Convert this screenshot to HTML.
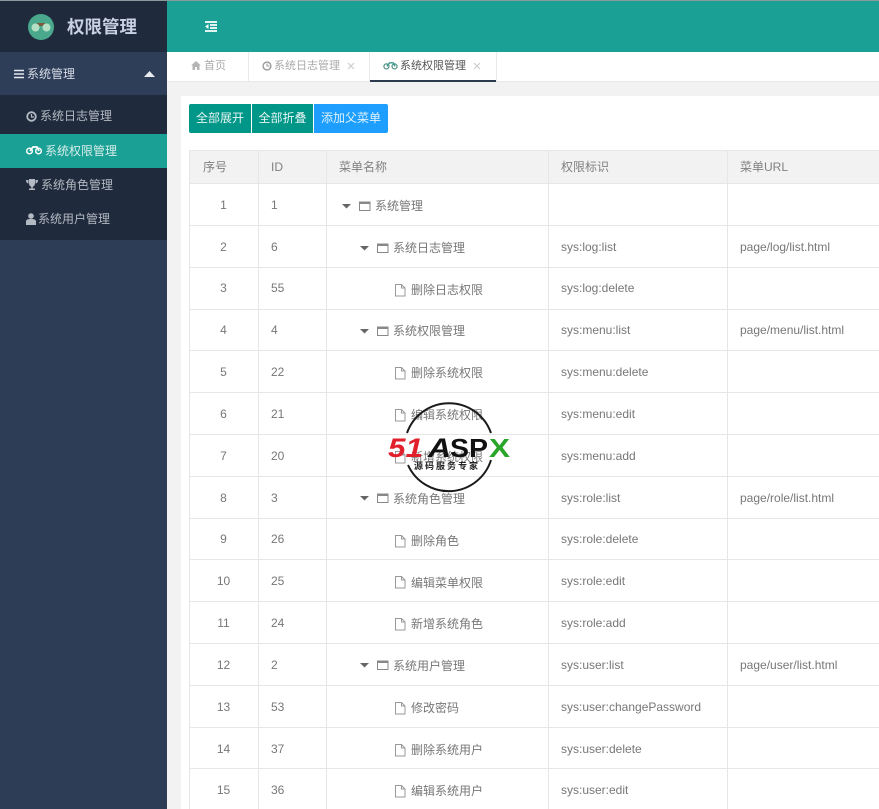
<!DOCTYPE html>
<html lang="zh"><head><meta charset="utf-8">
<style>
html,body{margin:0;padding:0;width:879px;height:809px;overflow:hidden;background:#f2f2f2;font-family:"Liberation Sans","Noto Sans CJK SC",sans-serif;font-size:12px;color:#777}
div,svg,span{position:absolute;white-space:nowrap}
.l{height:1px;background:#e6e6e6}
.v{width:1px;background:#e6e6e6;top:150px;height:659px}
.t{line-height:20px;height:20px}
.th{top:157px;color:#808080}
.m{color:#b4bac3;line-height:20px;height:20px}
.tab{font-size:11px}
svg{overflow:visible}
</style></head><body>
<!-- top bar -->
<div style="left:167px;top:0;width:712px;height:52px;background:#1aa094"></div>
<div style="left:0;top:0;width:167px;height:52px;background:#1f2a3c"></div>
<div style="left:0;top:0;width:879px;height:1px;background:#8a9a9a"></div>
<svg style="left:28px;top:14px" width="26" height="26" viewBox="0 0 26 26"><circle cx="13" cy="13" r="13" fill="#4aa88c"/><rect x="9" y="9" width="8" height="3" fill="#7a5a3c"/><circle cx="7.500" cy="13.500" r="4" fill="#b5e0c6"/><circle cx="18.500" cy="13.500" r="4" fill="#b5e0c6"/></svg>
<div style="left:67px;top:14px;font-size:17.500px;line-height:26px;font-weight:bold;color:#c9d2e2">权限管理</div>
<svg style="left:205px;top:21px" width="12" height="11" viewBox="0 0 12 11"><path d="M0 1h12M5 4h7M5 7h7M0 10h12" stroke="#fff" stroke-width="1.800"/><path d="M3.500 3v5L0 5.500z" fill="#fff"/></svg>
<!-- sidebar -->
<div style="left:0;top:52px;width:167px;height:757px;background:#2d3d55"></div>
<div style="left:0;top:52px;width:167px;height:43px;background:#2e3d58"></div>
<div style="left:0;top:95px;width:167px;height:145px;background:#1f2a3c"></div>
<div style="left:0;top:134px;width:167px;height:34px;background:#1aa094"></div>
<svg style="left:14px;top:69px" width="10" height="10" viewBox="0 0 10 10"><path d="M0 1.500h10M0 5h10M0 8.500h10" stroke="#e4e8ee" stroke-width="1.600"/></svg>
<div class="m" style="left:27px;top:64px;color:#d8dee8">系统管理</div>
<svg style="left:144px;top:71px" width="11" height="6"><path d="M0 6L5.500 0 11 6z" fill="#e8ebf0"/></svg>
<svg style="left:26px;top:111px" width="11" height="11" viewBox="0 0 11 11"><circle cx="5.500" cy="5.500" r="4.300" fill="none" stroke="#b4bac3" stroke-width="1.800"/><path d="M5.500 3v3H8" fill="none" stroke="#b4bac3" stroke-width="1.200"/></svg>
<div class="m" style="left:40px;top:106px">系统日志管理</div>
<svg style="left:26px;top:145px" width="16" height="10" viewBox="0 0 16 10"><circle cx="3.500" cy="6" r="2.800" fill="none" stroke="#fff" stroke-width="1.500"/><circle cx="12.500" cy="6" r="2.800" fill="none" stroke="#fff" stroke-width="1.500"/><path d="M4 6l3-4h4l2 4" fill="none" stroke="#fff" stroke-width="1.800"/></svg>
<div class="m" style="left:45px;top:141px;color:#d9eeeb">系统权限管理</div>
<svg style="left:26px;top:179px" width="12" height="12" viewBox="0 0 12 12"><path d="M3 0h6v4c0 2-1 3.500-2.300 3.800V9.500H9V11H3V9.500h2.300V7.800C4 7.500 3 6 3 4zM0 1h2.500v3.500C1 4.500 0 3 0 1zM12 1H9.500v3.500C11 4.500 12 3 12 1z" fill="#b4bac3"/></svg>
<div class="m" style="left:41px;top:175px">系统角色管理</div>
<svg style="left:26px;top:213px" width="10" height="12" viewBox="0 0 10 12"><circle cx="5" cy="3" r="2.800" fill="#b4bac3"/><path d="M0 12V8.500C0 6.500 2 6 5 6s5 .5 5 2.500V12z" fill="#b4bac3"/></svg>
<div class="m" style="left:38px;top:209px">系统用户管理</div>
<!-- tabs -->
<div style="left:167px;top:52px;width:712px;height:29px;background:#fff;border-bottom:1px solid #e8e8e8"></div>
<div style="left:248px;top:52px;width:1px;height:29px;background:#eaeaea"></div>
<div style="left:369px;top:52px;width:1px;height:29px;background:#eaeaea"></div>
<div style="left:496px;top:52px;width:1px;height:29px;background:#eaeaea"></div>
<div style="left:370px;top:80px;width:126px;height:2px;background:#2b3a4c"></div>
<svg style="left:191px;top:61px" width="10" height="9" viewBox="0 0 10 9"><path d="M5 0L0 4.500h1.500V9h2.500V6h2v3h2.500V4.500H10z" fill="#b5b5b5"/></svg>
<div class="t tab" style="left:204px;top:56px;color:#aaa">首页</div>
<svg style="left:262px;top:61px" width="10" height="10" viewBox="0 0 10 10"><circle cx="5" cy="5" r="3.900" fill="none" stroke="#999" stroke-width="1.400"/><path d="M5 2.500V5h2.500" fill="none" stroke="#999"/></svg>
<div class="t tab" style="left:274px;top:56px;color:#aaa">系统日志管理</div>
<svg style="left:347px;top:62px" width="8" height="8"><path d="M1 1l6 6M7 1L1 7" stroke="#c8c8c8" stroke-width="1"/></svg>
<svg style="left:383px;top:61px" width="15" height="9" viewBox="0 0 16 10"><circle cx="3.500" cy="6" r="2.800" fill="none" stroke="#4a8c84" stroke-width="1.300"/><circle cx="12.500" cy="6" r="2.800" fill="none" stroke="#4a8c84" stroke-width="1.300"/><path d="M4 6l3-4h4l2 4" fill="none" stroke="#3a9a8c" stroke-width="1.500"/></svg>
<div class="t tab" style="left:400px;top:56px;color:#555">系统权限管理</div>
<svg style="left:473px;top:62px" width="8" height="8"><path d="M1 1l6 6M7 1L1 7" stroke="#c8c8c8" stroke-width="1"/></svg>
<!-- card -->
<div style="left:181px;top:96px;width:698px;height:713px;background:#fff;border-radius:2px 0 0 0"></div>
<div style="left:189px;top:104px;width:62px;height:29px;background:#009688;border-radius:2px 0 0 2px;color:#e6f5f3;line-height:29px;text-align:center">全部展开</div>
<div style="left:252px;top:104px;width:61px;height:29px;background:#009688;color:#e6f5f3;line-height:29px;text-align:center">全部折叠</div>
<div style="left:314px;top:104px;width:74px;height:29px;background:#1e9fff;border-radius:0 2px 2px 0;color:#dff1ff;line-height:29px;text-align:center">添加父菜单</div>
<!-- table -->
<div style="left:189px;top:150px;width:690px;height:33px;background:#f2f2f2"></div>
<div class="l" style="left:189px;width:690px;top:150px"></div>
<div class="l" style="left:189px;width:690px;top:183px"></div>
<div class="l" style="left:189px;width:690px;top:225px"></div>
<div class="l" style="left:189px;width:690px;top:267px"></div>
<div class="l" style="left:189px;width:690px;top:309px"></div>
<div class="l" style="left:189px;width:690px;top:350px"></div>
<div class="l" style="left:189px;width:690px;top:392px"></div>
<div class="l" style="left:189px;width:690px;top:434px"></div>
<div class="l" style="left:189px;width:690px;top:476px"></div>
<div class="l" style="left:189px;width:690px;top:518px"></div>
<div class="l" style="left:189px;width:690px;top:559px"></div>
<div class="l" style="left:189px;width:690px;top:601px"></div>
<div class="l" style="left:189px;width:690px;top:643px"></div>
<div class="l" style="left:189px;width:690px;top:685px"></div>
<div class="l" style="left:189px;width:690px;top:727px"></div>
<div class="l" style="left:189px;width:690px;top:768px"></div>
<div class="v" style="left:189px"></div><div class="v" style="left:258px"></div><div class="v" style="left:326px"></div><div class="v" style="left:548px"></div><div class="v" style="left:727px"></div>
<div class="t th" style="left:203px">序号</div><div class="t th" style="left:271px">ID</div><div class="t th" style="left:339px">菜单名称</div><div class="t th" style="left:561px">权限标识</div><div class="t th" style="left:740px">菜单URL</div>

<svg style="left:0;top:0" width="879" height="809">
<defs>
<g id="f"><path d="M0 0h9L4.500 4.500z" transform="translate(-17 3)" fill="#666"/><rect x=".5" y="1" width="10.500" height="8.500" fill="none" stroke="#888"/><rect x=".5" y=".5" width="10.500" height="2.500" fill="#888"/></g>
<g id="d"><path d="M.5.500h6l3.500 3.500v8H.5zM6.500.500V4H10" fill="none" stroke="#999"/></g>
</defs>
<use href="#f" x="359" y="201"/><use href="#f" x="377" y="243"/><use href="#d" x="395" y="284"/><use href="#f" x="377" y="326"/><use href="#d" x="395" y="367"/><use href="#d" x="395" y="409"/><use href="#d" x="395" y="451"/><use href="#f" x="377" y="493"/><use href="#d" x="395" y="535"/><use href="#d" x="395" y="576"/><use href="#d" x="395" y="618"/><use href="#f" x="377" y="660"/><use href="#d" x="395" y="702"/><use href="#d" x="395" y="744"/><use href="#d" x="395" y="785"/>
</svg>

<div class="t" style="left:189px;width:69px;text-align:center;top:195px">1</div><div class="t" style="left:271px;top:195px">1</div><div class="t" style="left:375px;top:196px">系统管理</div>
<div class="t" style="left:189px;width:69px;text-align:center;top:237px">2</div><div class="t" style="left:271px;top:237px">6</div><div class="t" style="left:393px;top:238px">系统日志管理</div><div class="t" style="left:561px;top:237px">sys:log:list</div><div class="t" style="left:740px;top:237px">page/log/list.html</div>
<div class="t" style="left:189px;width:69px;text-align:center;top:278px">3</div><div class="t" style="left:271px;top:278px">55</div><div class="t" style="left:411px;top:280px">删除日志权限</div><div class="t" style="left:561px;top:278px">sys:log:delete</div>
<div class="t" style="left:189px;width:69px;text-align:center;top:320px">4</div><div class="t" style="left:271px;top:320px">4</div><div class="t" style="left:393px;top:321px">系统权限管理</div><div class="t" style="left:561px;top:320px">sys:menu:list</div><div class="t" style="left:740px;top:320px">page/menu/list.html</div>
<div class="t" style="left:189px;width:69px;text-align:center;top:362px">5</div><div class="t" style="left:271px;top:362px">22</div><div class="t" style="left:411px;top:363px">删除系统权限</div><div class="t" style="left:561px;top:362px">sys:menu:delete</div>
<div class="t" style="left:189px;width:69px;text-align:center;top:404px">6</div><div class="t" style="left:271px;top:404px">21</div><div class="t" style="left:411px;top:405px">编辑系统权限</div><div class="t" style="left:561px;top:404px">sys:menu:edit</div>
<div class="t" style="left:189px;width:69px;text-align:center;top:446px">7</div><div class="t" style="left:271px;top:446px">20</div><div class="t" style="left:411px;top:447px">新增系统权限</div><div class="t" style="left:561px;top:446px">sys:menu:add</div>
<div class="t" style="left:189px;width:69px;text-align:center;top:488px">8</div><div class="t" style="left:271px;top:488px">3</div><div class="t" style="left:393px;top:489px">系统角色管理</div><div class="t" style="left:561px;top:488px">sys:role:list</div><div class="t" style="left:740px;top:488px">page/role/list.html</div>
<div class="t" style="left:189px;width:69px;text-align:center;top:529px">9</div><div class="t" style="left:271px;top:529px">26</div><div class="t" style="left:411px;top:531px">删除角色</div><div class="t" style="left:561px;top:529px">sys:role:delete</div>
<div class="t" style="left:189px;width:69px;text-align:center;top:571px">10</div><div class="t" style="left:271px;top:571px">25</div><div class="t" style="left:411px;top:573px">编辑菜单权限</div><div class="t" style="left:561px;top:571px">sys:role:edit</div>
<div class="t" style="left:189px;width:69px;text-align:center;top:613px">11</div><div class="t" style="left:271px;top:613px">24</div><div class="t" style="left:411px;top:614px">新增系统角色</div><div class="t" style="left:561px;top:613px">sys:role:add</div>
<div class="t" style="left:189px;width:69px;text-align:center;top:655px">12</div><div class="t" style="left:271px;top:655px">2</div><div class="t" style="left:393px;top:656px">系统用户管理</div><div class="t" style="left:561px;top:655px">sys:user:list</div><div class="t" style="left:740px;top:655px">page/user/list.html</div>
<div class="t" style="left:189px;width:69px;text-align:center;top:697px">13</div><div class="t" style="left:271px;top:697px">53</div><div class="t" style="left:411px;top:698px">修改密码</div><div class="t" style="left:561px;top:697px">sys:user:changePassword</div>
<div class="t" style="left:189px;width:69px;text-align:center;top:739px">14</div><div class="t" style="left:271px;top:739px">37</div><div class="t" style="left:411px;top:740px">删除系统用户</div><div class="t" style="left:561px;top:739px">sys:user:delete</div>
<div class="t" style="left:189px;width:69px;text-align:center;top:780px">15</div><div class="t" style="left:271px;top:780px">36</div><div class="t" style="left:411px;top:781px">编辑系统用户</div><div class="t" style="left:561px;top:780px">sys:user:edit</div>

<!-- watermark -->
<svg style="left:388px;top:402px" width="124" height="92" viewBox="0 0 124 92">
<path d="M19 31A44.500 44.500 0 0 1 103 31M103 58A44.500 44.500 0 0 1 20 63" fill="none" stroke="#1a1a1a" stroke-width="2"/>
<text x="0" y="55" font-family="Liberation Sans,sans-serif" font-size="27" font-weight="bold" font-style="italic" fill="#e0202a" textLength="35" lengthAdjust="spacingAndGlyphs">51</text>
<text x="40" y="55" font-family="Liberation Sans,sans-serif" font-size="27" font-weight="bold" font-style="italic" fill="#111" textLength="23" lengthAdjust="spacingAndGlyphs">A</text>
<text x="62" y="55" font-family="Liberation Sans,sans-serif" font-size="26" font-weight="bold" fill="#111" textLength="38" lengthAdjust="spacingAndGlyphs">SP</text>
<text x="101" y="55" font-family="Liberation Sans,sans-serif" font-size="26" font-weight="bold" fill="#2aa52a" textLength="21" lengthAdjust="spacingAndGlyphs">X</text>
<text x="59" y="67" font-family="Liberation Sans,Noto Sans CJK SC,sans-serif" font-size="9" font-weight="bold" fill="#222" text-anchor="middle" letter-spacing="2">源码服务专家</text>
</svg>
</body></html>
